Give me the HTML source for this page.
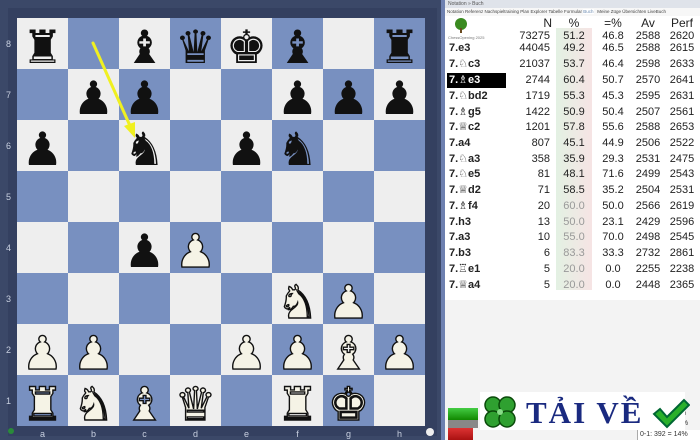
<!DOCTYPE html>
<html><head><meta charset="utf-8"><style>
*{margin:0;padding:0;box-sizing:border-box}
body{width:700px;height:440px;overflow:hidden;background:#f3f3f3;font-family:"Liberation Sans","DejaVu Sans",sans-serif;position:relative}
#frame{position:absolute;left:0;top:0;width:445px;height:440px;background:#3b4868}
#frame .in{position:absolute;left:8px;top:8px;width:429px;height:428px;background:#344060}
#frame .stripe{position:absolute;left:441px;top:0;width:4px;height:440px;background:#6d80b0}
#board{position:absolute;left:17px;top:18px;width:408px;height:408px}
.sq{position:absolute;width:51px;height:51px;text-align:center;font-family:"DejaVu Sans",sans-serif;font-size:46px;line-height:58px;overflow:hidden}
.l{background:#eeeeee}.d{background:#7890c0}
.b{color:#111}
.w{color:#f5f3e6;-webkit-text-stroke:1.4px #111}
.rk{position:absolute;left:6px;color:#c8d0e0;font-size:9px}
.fl{position:absolute;top:429px;color:#c8d0e0;font-size:9px;width:51px;text-align:center}
#panel{position:absolute;left:445px;top:0;width:255px;height:440px;background:#f3f3f3}
.t1{position:absolute;left:0;top:0;width:255px;height:8px;background:#dfe3ea;font-size:5px;color:#555;padding-left:3px;line-height:8px}
.t2{position:absolute;left:0;top:8px;width:255px;height:8px;background:#f7f7f7;font-size:4.5px;color:#444;padding-left:2px;line-height:8px;white-space:nowrap}
#tbl{position:absolute;left:0;top:16px;width:255px;height:284px;background:#fff}
.row{position:absolute;left:0;height:15px;width:255px;font-size:11px;line-height:15px;color:#222}
.row span{position:absolute}
.mv{left:4px;font-weight:bold}
.n{right:150px;text-align:right}
.p{left:111px;width:36px;text-align:center}
.e{left:150px;width:36px;text-align:center}
.av{left:188px;width:30px;text-align:center}
.pf{left:222px;width:30px;text-align:center}
.pcol{position:absolute;left:111px;top:12px;width:36px;height:262px;background:linear-gradient(90deg,#e3f1e3,#f6e4e4)}
.gr{color:#999}
</style></head><body>
<div id="frame"><div class="in"></div><div class="stripe"></div></div>
<div id="board">
<div class="sq l b" style="left:0;top:0">♜</div><div class="sq d" style="left:51px;top:0"></div><div class="sq l b" style="left:102px;top:0">♝</div><div class="sq d b" style="left:153px;top:0">♛</div><div class="sq l b" style="left:204px;top:0">♚</div><div class="sq d b" style="left:255px;top:0">♝</div><div class="sq l" style="left:306px;top:0"></div><div class="sq d b" style="left:357px;top:0">♜</div>
<div class="sq d" style="left:0;top:51px"></div><div class="sq l b" style="left:51px;top:51px">♟</div><div class="sq d b" style="left:102px;top:51px">♟</div><div class="sq l" style="left:153px;top:51px"></div><div class="sq d" style="left:204px;top:51px"></div><div class="sq l b" style="left:255px;top:51px">♟</div><div class="sq d b" style="left:306px;top:51px">♟</div><div class="sq l b" style="left:357px;top:51px">♟</div>
<div class="sq l b" style="left:0;top:102px">♟</div><div class="sq d" style="left:51px;top:102px"></div><div class="sq l b" style="left:102px;top:102px">♞</div><div class="sq d" style="left:153px;top:102px"></div><div class="sq l b" style="left:204px;top:102px">♟</div><div class="sq d b" style="left:255px;top:102px">♞</div><div class="sq l" style="left:306px;top:102px"></div><div class="sq d" style="left:357px;top:102px"></div>
<div class="sq d" style="left:0;top:153px"></div><div class="sq l" style="left:51px;top:153px"></div><div class="sq d" style="left:102px;top:153px"></div><div class="sq l" style="left:153px;top:153px"></div><div class="sq d" style="left:204px;top:153px"></div><div class="sq l" style="left:255px;top:153px"></div><div class="sq d" style="left:306px;top:153px"></div><div class="sq l" style="left:357px;top:153px"></div>
<div class="sq l" style="left:0;top:204px"></div><div class="sq d" style="left:51px;top:204px"></div><div class="sq l b" style="left:102px;top:204px">♟</div><div class="sq d w" style="left:153px;top:204px">♟</div><div class="sq l" style="left:204px;top:204px"></div><div class="sq d" style="left:255px;top:204px"></div><div class="sq l" style="left:306px;top:204px"></div><div class="sq d" style="left:357px;top:204px"></div>
<div class="sq d" style="left:0;top:255px"></div><div class="sq l" style="left:51px;top:255px"></div><div class="sq d" style="left:102px;top:255px"></div><div class="sq l" style="left:153px;top:255px"></div><div class="sq d" style="left:204px;top:255px"></div><div class="sq l w" style="left:255px;top:255px">♞</div><div class="sq d w" style="left:306px;top:255px">♟</div><div class="sq l" style="left:357px;top:255px"></div>
<div class="sq l w" style="left:0;top:306px">♟</div><div class="sq d w" style="left:51px;top:306px">♟</div><div class="sq l" style="left:102px;top:306px"></div><div class="sq d" style="left:153px;top:306px"></div><div class="sq l w" style="left:204px;top:306px">♟</div><div class="sq d w" style="left:255px;top:306px">♟</div><div class="sq l w" style="left:306px;top:306px">♝</div><div class="sq d w" style="left:357px;top:306px">♟</div>
<div class="sq d w" style="left:0;top:357px">♜</div><div class="sq l w" style="left:51px;top:357px">♞</div><div class="sq d w" style="left:102px;top:357px">♝</div><div class="sq l w" style="left:153px;top:357px">♛</div><div class="sq d" style="left:204px;top:357px"></div><div class="sq l w" style="left:255px;top:357px">♜</div><div class="sq d w" style="left:306px;top:357px">♚</div><div class="sq l" style="left:357px;top:357px"></div>
<svg style="position:absolute;left:0;top:0" width="408" height="408"><line x1="76" y1="25" x2="114" y2="110" stroke="#f0f020" stroke-width="3" stroke-linecap="round"/><polygon points="118,120 107,108 118,104" fill="#f0f020"/></svg>
</div>
<div class="rk" style="top:39px">8</div><div class="rk" style="top:90px">7</div><div class="rk" style="top:141px">6</div><div class="rk" style="top:192px">5</div><div class="rk" style="top:243px">4</div><div class="rk" style="top:294px">3</div><div class="rk" style="top:345px">2</div><div class="rk" style="top:396px">1</div>
<div class="fl" style="left:17px">a</div><div class="fl" style="left:68px">b</div><div class="fl" style="left:119px">c</div><div class="fl" style="left:170px">d</div><div class="fl" style="left:221px">e</div><div class="fl" style="left:272px">f</div><div class="fl" style="left:323px">g</div><div class="fl" style="left:374px">h</div>
<div style="position:absolute;left:8px;top:428px;width:6px;height:6px;background:#2a8a3a;border-radius:50%"></div>
<div style="position:absolute;left:426px;top:428px;width:8px;height:8px;background:#eee;border-radius:50%"></div>

<div id="panel">
<div class="t1">Notation » Buch</div>
<div class="t2">Notation  Referenz  Nachspieltraining  Plan Explorer  Tabelle  Formular  <span style="background:#fff;color:#6a8ab0">Buch</span>  &nbsp; Meine Züge  Übersichten  LiveBuch</div>
<div id="tbl">
<div class="pcol"></div>
<div style="position:absolute;left:10px;top:2px;width:12px;height:12px;border-radius:50%;background:#3a8a20"></div>
<div style="position:absolute;left:15px;top:12px;width:2px;height:5px;background:#6a4a20"></div>
<div style="position:absolute;left:3px;top:19px;font-size:4px;color:#777">ChessOpening 2025</div>
<div class="row" style="top:0px;font-size:12px"><span class="n" style="right:148px">N</span><span class="p">%</span><span class="e">=%</span><span class="av">Av</span><span class="pf">Perf</span></div>
<div class="row" style="top:13px"><span class="n">73275</span><span class="p">51.2</span><span class="e">46.8</span><span class="av">2588</span><span class="pf">2620</span></div>
<div class="row" style="top:25px"><span class="mv">7.e3</span><span class="n">44045</span><span class="p">49.2</span><span class="e">46.5</span><span class="av">2588</span><span class="pf">2615</span></div>
<div class="row" style="top:41px"><span class="mv">7.♘c3</span><span class="n">21037</span><span class="p">53.7</span><span class="e">46.4</span><span class="av">2598</span><span class="pf">2633</span></div>
<div class="row" style="top:57px"><span class="mv" style="left:2px;width:59px;background:#000;color:#fff;padding-left:2px">7.♗e3</span><span class="n">2744</span><span class="p">60.4</span><span class="e">50.7</span><span class="av">2570</span><span class="pf">2641</span></div>
<div class="row" style="top:73px"><span class="mv">7.♘bd2</span><span class="n">1719</span><span class="p">55.3</span><span class="e">45.3</span><span class="av">2595</span><span class="pf">2631</span></div>
<div class="row" style="top:89px"><span class="mv">7.♗g5</span><span class="n">1422</span><span class="p">50.9</span><span class="e">50.4</span><span class="av">2507</span><span class="pf">2561</span></div>
<div class="row" style="top:104px"><span class="mv">7.♕c2</span><span class="n">1201</span><span class="p">57.8</span><span class="e">55.6</span><span class="av">2588</span><span class="pf">2653</span></div>
<div class="row" style="top:120px"><span class="mv">7.a4</span><span class="n">807</span><span class="p">45.1</span><span class="e">44.9</span><span class="av">2506</span><span class="pf">2522</span></div>
<div class="row" style="top:136px"><span class="mv">7.♘a3</span><span class="n">358</span><span class="p">35.9</span><span class="e">29.3</span><span class="av">2531</span><span class="pf">2475</span></div>
<div class="row" style="top:151px"><span class="mv">7.♘e5</span><span class="n">81</span><span class="p">48.1</span><span class="e">71.6</span><span class="av">2499</span><span class="pf">2543</span></div>
<div class="row" style="top:167px"><span class="mv">7.♕d2</span><span class="n">71</span><span class="p">58.5</span><span class="e">35.2</span><span class="av">2504</span><span class="pf">2531</span></div>
<div class="row" style="top:183px"><span class="mv">7.♗f4</span><span class="n">20</span><span class="p gr">60.0</span><span class="e">50.0</span><span class="av">2566</span><span class="pf">2619</span></div>
<div class="row" style="top:199px"><span class="mv">7.h3</span><span class="n">13</span><span class="p gr">50.0</span><span class="e">23.1</span><span class="av">2429</span><span class="pf">2596</span></div>
<div class="row" style="top:214px"><span class="mv">7.a3</span><span class="n">10</span><span class="p gr">55.0</span><span class="e">70.0</span><span class="av">2498</span><span class="pf">2545</span></div>
<div class="row" style="top:230px"><span class="mv">7.b3</span><span class="n">6</span><span class="p gr">83.3</span><span class="e">33.3</span><span class="av">2732</span><span class="pf">2861</span></div>
<div class="row" style="top:246px"><span class="mv">7.♖e1</span><span class="n">5</span><span class="p gr">20.0</span><span class="e">0.0</span><span class="av">2255</span><span class="pf">2238</span></div>
<div class="row" style="top:262px"><span class="mv">7.♕a4</span><span class="n">5</span><span class="p gr">20.0</span><span class="e">0.0</span><span class="av">2448</span><span class="pf">2365</span></div>
</div>
<div style="position:absolute;left:3px;top:408px;width:30px;height:12px;background:linear-gradient(#4c4,#180)"></div>
<div style="position:absolute;left:3px;top:420px;width:30px;height:8px;background:#888"></div>
<div style="position:absolute;left:3px;top:428px;width:25px;height:12px;background:linear-gradient(#d33,#a11)"></div>
<div style="position:absolute;left:235px;top:410px;font-size:7px;color:#333">%</div>
<div style="position:absolute;left:233px;top:420px;font-size:7px;color:#333">1%</div>
<div style="position:absolute;left:192px;top:430px;width:63px;height:10px;background:#fff;border-left:1px solid #aaa;font-size:7px;color:#333;padding-left:2px;line-height:10px">0-1: 392 = 14%</div>
</div>
<div style="position:absolute;left:480px;top:392px;width:205px;height:38px;background:#fff"></div>
<svg style="position:absolute;left:480px;top:392px" width="40" height="40" viewBox="0 0 40 40">
<g fill="#2fa030" stroke="#0a4a0a" stroke-width="1.5">
<circle cx="13" cy="13" r="8"/><circle cx="27" cy="13" r="8"/><circle cx="13" cy="27" r="8"/><circle cx="27" cy="27" r="8"/>
</g><circle cx="20" cy="20" r="3" fill="#8d8"/></svg>
<div style="position:absolute;left:526px;top:393px;font-family:'Liberation Serif',serif;font-weight:bold;font-size:31px;color:#1a2a80;letter-spacing:2px;line-height:40px">TẢI VỀ</div>
<svg style="position:absolute;left:652px;top:398px" width="38" height="32" viewBox="0 0 38 32"><path d="M2 16 L8 11 L15 19 L32 2 L37 7 L15 29 Z" fill="#2ab02a" stroke="#063" stroke-width="2"/></svg>
</body></html>
